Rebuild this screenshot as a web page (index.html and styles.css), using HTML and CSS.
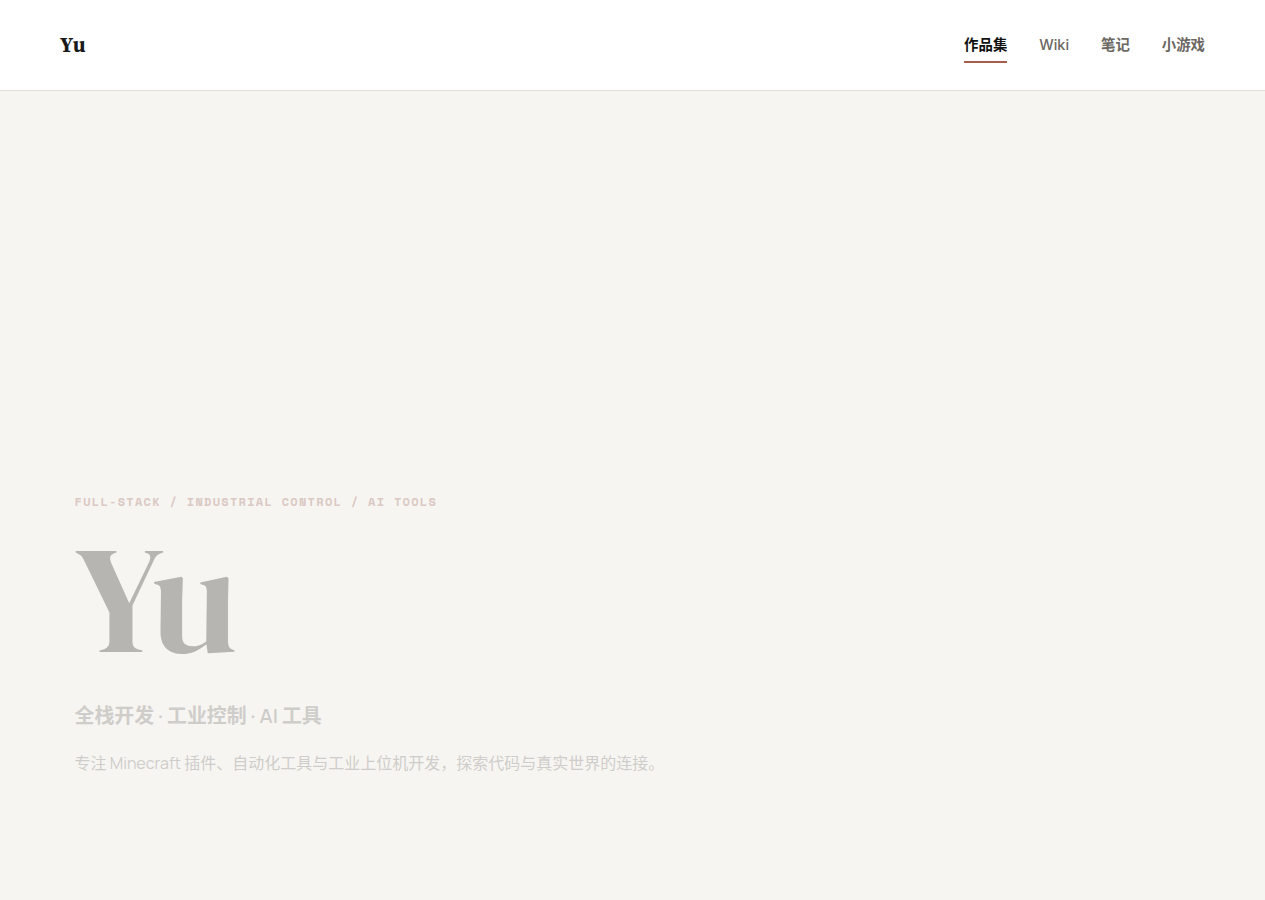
FILE: index.html
```html
<!DOCTYPE html>
<html lang="zh-CN">
<head>
  <meta charset="UTF-8" />
  <meta name="viewport" content="width=device-width, initial-scale=1.0"/>
  <title>Yu</title>
  <link rel="stylesheet" href="styles.css">
</head>
<body>

  <header class="header">
    <a href="#" class="logo">Yu</a>
    <nav class="nav">
      <a href="#" class="active">作品集</a>
      <a href="#" class="latin">Wiki</a>
      <a href="#">笔记</a>
      <a href="#">小游戏</a>
    </nav>
  </header>

  <main class="hero">
    <p class="eyebrow">FULL-STACK / INDUSTRIAL CONTROL / AI TOOLS</p>
    <h1 class="title">Yu</h1>
    <p class="subtitle">全栈开发 · 工业控制 · AI 工具</p>
    <p class="desc">专注 Minecraft 插件、自动化工具与工业上位机开发，探索代码与真实世界的连接。</p>
  </main>

</body>
</html>
```
FILE: styles.css
```css
* {
  box-sizing: border-box;
  margin: 0;
  padding: 0;
}

body {
  font-family: Manrope, Inter, "Noto Sans CJK SC", sans-serif;
  background: #f7f5f2;
  color: #1a1a1a;
  min-height: 100vh;
  display: flex;
  flex-direction: column;
}

a {
  color: inherit;
  text-decoration: none;
}

.header {
  display: flex;
  align-items: center;
  justify-content: space-between;
  height: 91px;
  padding: 0 60px;
  background: #fff;
  border-bottom: 1px solid #e3ddd9;
}

.logo {
  font-family: "Source Serif 4", "Liberation Serif", serif;
  font-size: 21px;
  font-weight: 700;
  letter-spacing: 1px;
  padding-bottom: 2px;
}

.nav {
  display: flex;
  gap: 32px;
  font-family: Inter, "Noto Sans CJK SC", sans-serif;
  font-size: 14.4px;
  font-weight: 600;
  color: #6b6762;
}

.nav a {
  height: 36px;
  line-height: 36px;
  border-bottom: 2px solid transparent;
}

.nav .latin {
  font-weight: 500;
}

.nav .active {
  color: #111;
  border-bottom-color: #a65d4a;
}

.hero {
  flex: 1;
  display: flex;
  flex-direction: column;
  justify-content: flex-end;
  padding: 0 74.5px 123px;
}

.eyebrow {
  font-family: "Space Mono", "Liberation Mono", monospace;
  font-size: 12px;
  font-weight: 700;
  letter-spacing: 1.29px;
  line-height: 18px;
  color: #dac8c3;
}

.title {
  font-family: "DM Serif Display", "Liberation Serif", serif;
  font-size: 152px;
  font-weight: 400;
  line-height: 130px;
  letter-spacing: -2.5px;
  margin: 23px 0 36px;
  color: #b6b5b1;
}

.subtitle {
  font-size: 19.9px;
  font-weight: 600;
  line-height: 32px;
  color: #cfcdca;
}

.desc {
  font-size: 16px;
  line-height: 28px;
  margin-top: 17px;
  color: #cfcdca;
}
```
